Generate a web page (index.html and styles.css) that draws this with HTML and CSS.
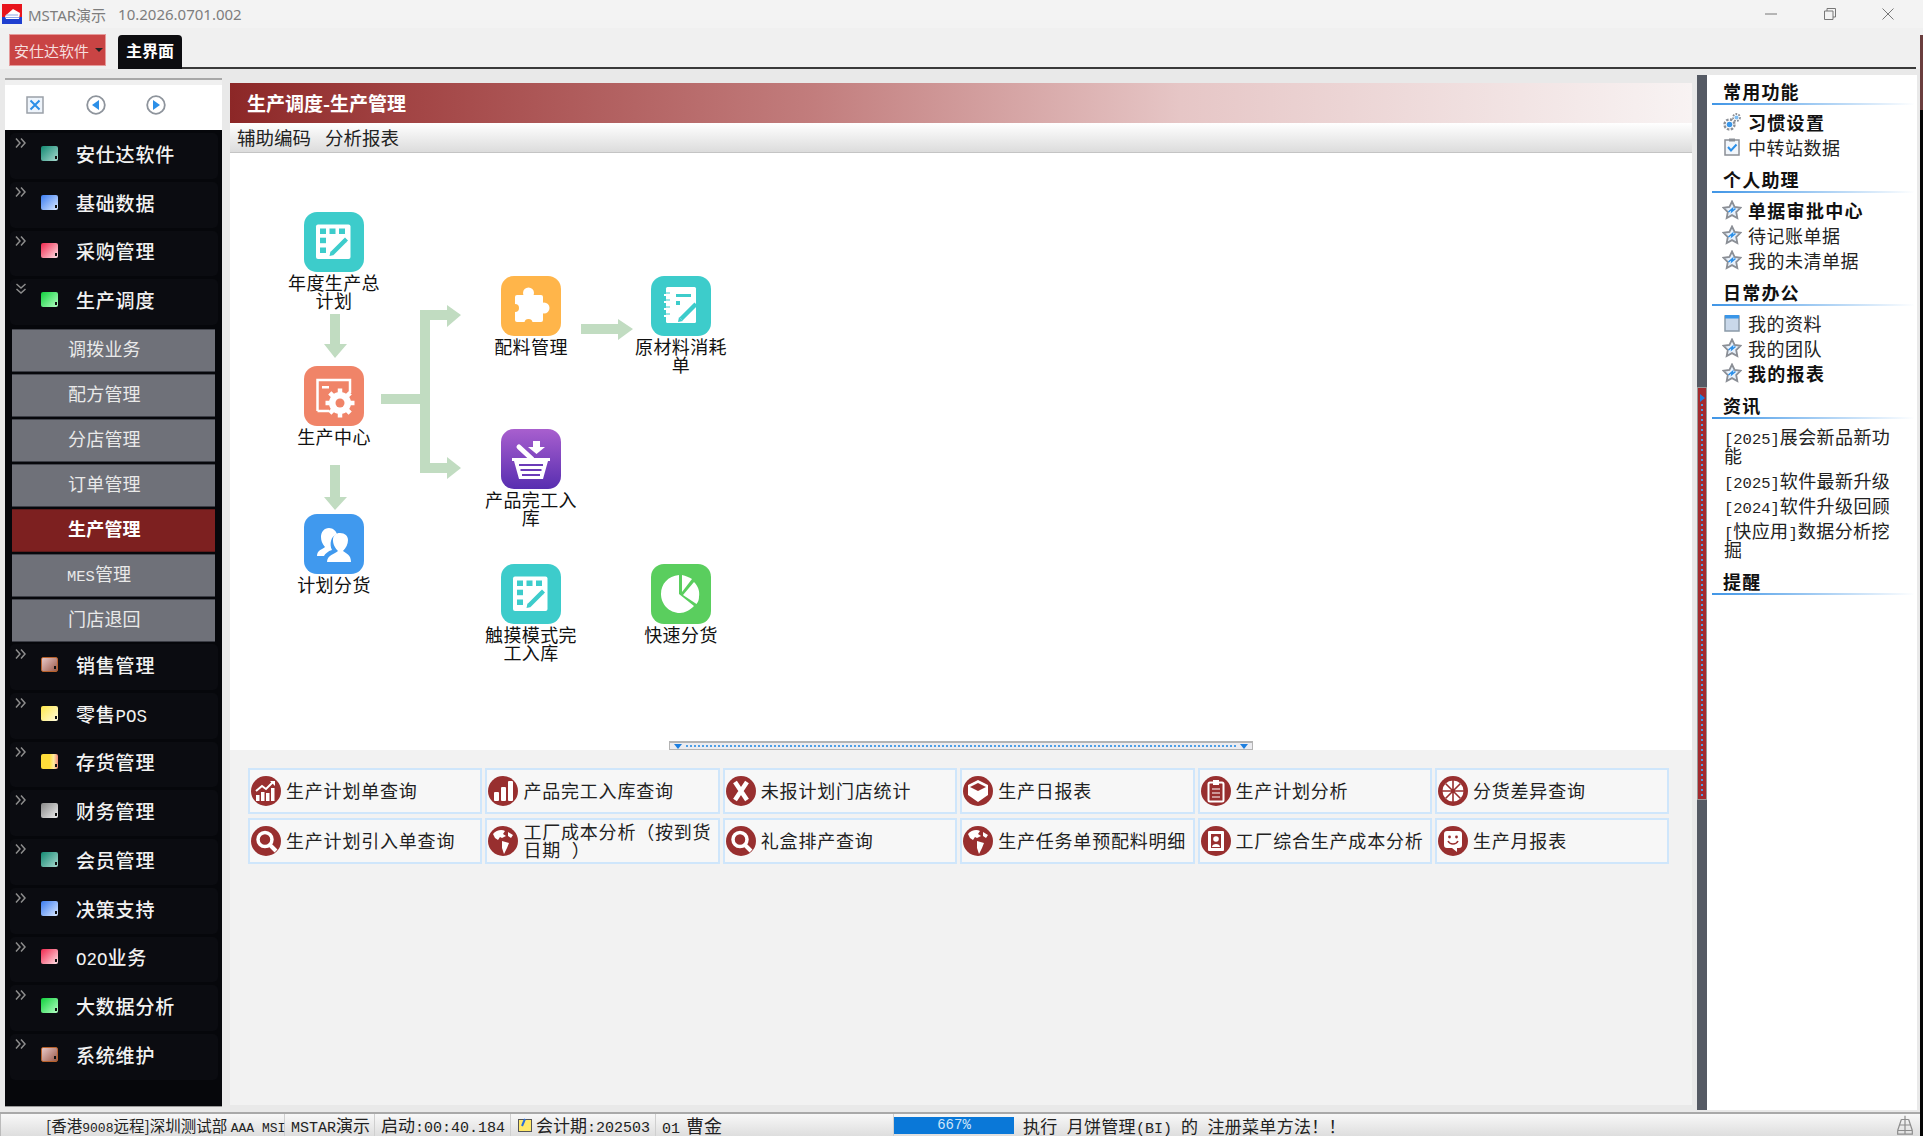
FILE: index.html
```html
<!DOCTYPE html>
<html lang="zh-CN">
<head>
<meta charset="utf-8">
<title>MSTAR演示</title>
<link rel="stylesheet" href="styles.css">
</head>
<body>
<svg class="defs" aria-hidden="true">
  <defs>
    <symbol id="i-edit" viewBox="0 0 60 60">
      <rect x="12" y="12.5" width="34.5" height="34.5" rx="2" fill="#fff"/>
      <g fill="#3dcccb"><rect x="16" y="16.500" width="6" height="5.500"/><rect x="25.500" y="16.500" width="6" height="5.500"/><rect x="35" y="16.500" width="6" height="5.500"/><rect x="16" y="25.700" width="6" height="5.500"/><rect x="16" y="35.500" width="6" height="5.500"/></g>
      <path d="M28 41.500 L41 28.500" stroke="#3dcccb" stroke-width="4.500" fill="none"/><path d="M25.500 44 l1 -4.500 l3.500 3.500z M41 25.500 l3 3 l-2 2 l-3 -3z" fill="#3dcccb"/>
    </symbol>
    <symbol id="i-search" viewBox="0 0 30 30"><circle cx="15" cy="15" r="15" fill="#982f2f"/><circle cx="14" cy="13.500" r="7" fill="none" stroke="#fff" stroke-width="3.500"/><path d="M19 19 L25 25" stroke="#fff" stroke-width="4"/></symbol>
    <symbol id="i-globe" viewBox="0 0 30 30"><circle cx="15" cy="15" r="15" fill="#982f2f"/><path d="M5 8 C8 4 14 3 17 5 L15 8 L18 10 L14 12 L12 11 L10 14 L7 12z M14 15 L21 17 L19 22 L16 28 L14 22z M20 6 L25 9 L23 12 L20 10z" fill="#fff"/></symbol>
    <symbol id="i-star" viewBox="0 0 20 20"><path d="M10 1.500 L12.600 7 L18.500 7.800 L14.200 12 L15.300 18 L10 15.100 L4.700 18 L5.800 12 L1.500 7.800 L7.400 7z" fill="#e8f1fb" stroke="#8b8f96" stroke-width="1.800"/><path d="M6.500 12 L10.500 8.500 L9.800 11.500 L13.500 8.500" fill="none" stroke="#2b8fe8" stroke-width="1.500"/></symbol>
    <symbol id="i-chev" viewBox="0 0 12 12"><path d="M1 1.500 L5 6 L1 10.500 M6 1.500 L10 6 L6 10.500" fill="none" stroke="#8d8d8d" stroke-width="1.500"/></symbol>
    <symbol id="i-chevd" viewBox="0 0 12 12"><path d="M1.500 1 L6 5 L10.500 1 M1.500 6 L6 10 L10.500 6" fill="none" stroke="#8d8d8d" stroke-width="1.500"/></symbol>
  </defs>
</svg>

<div class="app">
  <header class="titlebar">
    <svg class="logo" viewBox="0 0 20 20"><rect width="20" height="20" fill="#e8141c"/><rect y="13" width="20" height="7" fill="#1f3fd0"/><path d="M3 12 L11 5 L18 9 L17 15 L4 15z" fill="#fff"/><path d="M4 11 H16 M3 13.500 H17" stroke="#8fa6e8" stroke-width="1"/></svg>
    <span class="apptitle">MSTAR演示</span>
    <span class="appver">10.2026.0701.002</span>
    <div class="winbtns">
      <svg class="winbtn" viewBox="0 0 14 14"><path d="M1 7 H13" stroke="#777" fill="none"/></svg>
      <svg class="winbtn" viewBox="0 0 14 14"><path d="M1.500 4 H10 V12.500 H1.500z M4 4 V1.500 H12.500 V10 H10" stroke="#777" fill="none"/></svg>
      <svg class="winbtn" viewBox="0 0 14 14"><path d="M1.500 1.500 L12.500 12.500 M12.500 1.500 L1.500 12.500" stroke="#777" fill="none"/></svg>
    </div>
  </header>

  <div class="tabbar">
    <div class="menu-btn">安仕达软件<span class="caret"></span></div>
    <div class="tab">主界面</div>
  </div>

  <main class="main">
    <aside class="sidebar">
      <div class="side-tools">
        <svg class="tool" viewBox="0 0 20 20"><rect x="2" y="2" width="16" height="16" fill="#eef4fb" stroke="#9aa0a8" stroke-width="1.500"/><path d="M5.500 5.500 L14.500 14.500 M14.500 5.500 L5.500 14.500" stroke="#2b8fe8" stroke-width="2"/></svg>
        <svg class="tool" viewBox="0 0 20 20"><circle cx="10" cy="10" r="8.800" fill="#fff" stroke="#8e949c" stroke-width="1.800"/><path d="M13 5 V15 L6 10z" fill="#2b8fe8"/></svg>
        <svg class="tool" viewBox="0 0 20 20"><circle cx="10" cy="10" r="8.800" fill="#fff" stroke="#8e949c" stroke-width="1.800"/><path d="M7 5 V15 L14 10z" fill="#2b8fe8"/></svg>
      </div>
      <nav class="nav">
        <div class="nav-h"><svg class="chev"><use href="#i-chev"/></svg><i class="sq sq-teal"></i><span>安仕达软件</span></div>
        <div class="nav-h"><svg class="chev"><use href="#i-chev"/></svg><i class="sq sq-blue"></i><span>基础数据</span></div>
        <div class="nav-h"><svg class="chev"><use href="#i-chev"/></svg><i class="sq sq-red"></i><span>采购管理</span></div>
        <div class="nav-h"><svg class="chev"><use href="#i-chevd"/></svg><i class="sq sq-green"></i><span>生产调度</span></div>
        <div class="nav-subs">
          <div class="sub">调拨业务</div>
          <div class="sub">配方管理</div>
          <div class="sub">分店管理</div>
          <div class="sub">订单管理</div>
          <div class="sub sub-on">生产管理</div>
          <div class="sub sub-left"><span class="lat">MES</span>管理</div>
          <div class="sub">门店退回</div>
        </div>
        <div class="nav-h"><svg class="chev"><use href="#i-chev"/></svg><i class="sq sq-brown"></i><span>销售管理</span></div>
        <div class="nav-h"><svg class="chev"><use href="#i-chev"/></svg><i class="sq sq-yellow"></i><span>零售<span class="lat">POS</span></span></div>
        <div class="nav-h"><svg class="chev"><use href="#i-chev"/></svg><i class="sq sq-stock"></i><span>存货管理</span></div>
        <div class="nav-h"><svg class="chev"><use href="#i-chev"/></svg><i class="sq sq-gray"></i><span>财务管理</span></div>
        <div class="nav-h"><svg class="chev"><use href="#i-chev"/></svg><i class="sq sq-teal"></i><span>会员管理</span></div>
        <div class="nav-h"><svg class="chev"><use href="#i-chev"/></svg><i class="sq sq-blue"></i><span>决策支持</span></div>
        <div class="nav-h"><svg class="chev"><use href="#i-chev"/></svg><i class="sq sq-red"></i><span><span class="lat">O2O</span>业务</span></div>
        <div class="nav-h"><svg class="chev"><use href="#i-chev"/></svg><i class="sq sq-green"></i><span>大数据分析</span></div>
        <div class="nav-h"><svg class="chev"><use href="#i-chev"/></svg><i class="sq sq-brown"></i><span>系统维护</span></div>
      </nav>
    </aside>

    <section class="center">
      <div class="page-head">生产调度-生产管理</div>
      <div class="page-sub"><span>辅助编码</span><span>分析报表</span></div>
      <div class="canvas">
        <svg class="flow" viewBox="0 0 520 400">
          <g fill="#c1dcc1">
            <polygon points="100,161 110,161 110,191 117,191 105,205 94,191 100,191"/>
            <polygon points="100,312 110,312 110,344 117,344 105,357 94,344 100,344"/>
            <polygon points="151,241 190,241 190,157 217,157 217,152 231,162 217,174 217,167 200,167 200,310 217,310 217,304 231,315 217,326 217,320 190,320 190,251 151,251"/>
            <polygon points="351,171 388,171 388,166 403,176 388,187 388,181 351,181"/>
          </g>
        </svg>

        <div class="node n1">
          <svg class="node-ic teal"><use href="#i-edit"/></svg>
          <div class="node-t">年度生产总计划</div>
        </div>
        <div class="node n2">
          <svg class="node-ic salmon" viewBox="0 0 60 60">
            <path d="M13.500 45 V14 H46 V27" fill="none" stroke="#fff" stroke-width="2.500"/><path d="M13.500 45 H25" fill="none" stroke="#fff" stroke-width="2.500"/><rect x="18" y="20" width="7" height="2.500" fill="#fff"/>
            <circle cx="36" cy="37" r="11" fill="#fff"/><g stroke="#fff" stroke-width="4.500"><path d="M36 22.500 V51.500 M21.500 37 H50.500 M25.800 26.800 L46.200 47.200 M46.200 26.800 L25.800 47.200"/></g><circle cx="36" cy="37" r="4.500" fill="#f08468"/>
          </svg>
          <div class="node-t">生产中心</div>
        </div>
        <div class="node n3">
          <svg class="node-ic blue" viewBox="0 0 60 60">
            <path d="M13 42 C13 36 19 35 21 33 C18 30 17 26 17 23 C17 18 20 14 25 14 C29 14 32 17 33 20 C27 22 25 30 28 36 C24 37 21 40 20 42z" fill="#fff"/>
            <path d="M23 48 C23 41 31 40 34 37 C30 33 29 29 29 26 C29 21 32 19 36 19 C41 19 44 22 44 26 C44 30 42 34 39 37 C43 40 47 41 47 48z" fill="#fff"/>
          </svg>
          <div class="node-t">计划分货</div>
        </div>
        <div class="node n4">
          <svg class="node-ic amber" viewBox="0 0 60 60">
            <rect x="14" y="19" width="28" height="27" rx="2" fill="#fff"/><circle cx="27.500" cy="17" r="5.500" fill="#fff"/><circle cx="43" cy="32" r="5.500" fill="#fff"/><circle cx="14" cy="32" r="4" fill="#ffb54a"/><circle cx="27.500" cy="47" r="4" fill="#ffb54a"/>
          </svg>
          <div class="node-t">配料管理</div>
        </div>
        <div class="node n5">
          <svg class="node-ic teal" viewBox="0 0 60 60">
            <rect x="15" y="11" width="30" height="36" rx="1.500" fill="#fff"/>
            <path d="M13 19 H19 M13 26 H19 M13 33 H19 M13 40 H19" stroke="#fff" stroke-width="2"/><path d="M14 17 H19 M14 24 H19 M14 31 H19 M14 38 H19" stroke="#3dcccb" stroke-width="1.200"/>
            <rect x="25" y="18" width="15" height="3" fill="#3dcccb"/><rect x="25" y="25" width="4" height="4" fill="#3dcccb"/>
            <path d="M30 43 L45 28" stroke="#3dcccb" stroke-width="4.500"/><path d="M27 46 l1 -5 l4 4z" fill="#3dcccb"/>
          </svg>
          <div class="node-t">原材料消耗单</div>
        </div>
        <div class="node n6">
          <svg class="node-ic purple" viewBox="0 0 60 60">
            <path d="M32 12 H39 V18 H44 L35.500 25 L27 18 H32z" fill="#fff"/>
            <path d="M18 18 L31 30" stroke="#fff" stroke-width="5" stroke-linecap="round"/>
            <path d="M11 29 H49 V32 H47 L42 50 H18 L13 32 H11z" fill="#fff"/>
            <path d="M18 36 H42 M19.500 41 H40.500 M21 46 H39" stroke="#6b3bb8" stroke-width="1.800"/>
          </svg>
          <div class="node-t">产品完工入库</div>
        </div>
        <div class="node n7">
          <svg class="node-ic teal"><use href="#i-edit"/></svg>
          <div class="node-t">触摸模式完工入库</div>
        </div>
        <div class="node n8">
          <svg class="node-ic green" viewBox="0 0 60 60">
            <path d="M28 30 V11 C17 12 10 20 10 30 C10 40 18 49 29 49 C34 49 39 46 43 42z" fill="#fff"/>
            <path d="M31 11 V28 L41 15 C38 13 35 12 31 11z" fill="#fff"/>
            <path d="M32 31 L43 18 C47 22 49 27 48 33 C48 36 47 38 45.500 40z" fill="#fff"/>
          </svg>
          <div class="node-t">快速分货</div>
        </div>

        <div class="split-h"><span class="tri"></span><span class="dots"></span><span class="tri"></span></div>
      </div>

      <div class="lower">
        <div class="tiles">
          <div class="tile">
            <svg class="tile-ic" viewBox="0 0 30 30"><circle cx="15" cy="15" r="15" fill="#982f2f"/><path d="M5 15 L11 10 L15 13 L22 6" fill="none" stroke="#fff" stroke-width="2"/><path d="M19 5 H24 V10z" fill="#fff"/><rect x="5" y="19" width="3.500" height="6" fill="#fff"/><rect x="10" y="16" width="3.500" height="9" fill="#fff"/><rect x="15" y="17" width="3.500" height="8" fill="#fff"/><rect x="20" y="12" width="3.500" height="13" fill="#fff"/></svg>
            <span>生产计划单查询</span>
          </div>
          <div class="tile">
            <svg class="tile-ic" viewBox="0 0 30 30"><circle cx="15" cy="15" r="15" fill="#982f2f"/><rect x="6" y="16" width="5" height="9" rx="1" fill="#fff"/><rect x="13" y="11" width="5" height="14" rx="1" fill="#fff"/><rect x="20" y="5" width="5" height="20" rx="1" fill="#fff"/></svg>
            <span>产品完工入库查询</span>
          </div>
          <div class="tile">
            <svg class="tile-ic" viewBox="0 0 30 30"><circle cx="15" cy="15" r="15" fill="#982f2f"/><path d="M9 6 L21 24 M21 6 L9 24" stroke="#fff" stroke-width="4.500"/></svg>
            <span>未报计划门店统计</span>
          </div>
          <div class="tile">
            <svg class="tile-ic" viewBox="0 0 30 30"><circle cx="15" cy="15" r="15" fill="#982f2f"/><path d="M15 4 L25 9 V19 L15 26 L5 19 V9z" fill="#fff"/><path d="M7 11 L15 7 L23 11 L15 15z" fill="#982f2f"/></svg>
            <span>生产日报表</span>
          </div>
          <div class="tile">
            <svg class="tile-ic" viewBox="0 0 30 30"><circle cx="15" cy="15" r="15" fill="#982f2f"/><rect x="7.500" y="6.500" width="15" height="19" rx="1.500" fill="none" stroke="#fff" stroke-width="2"/><rect x="12" y="4" width="6" height="5" fill="#fff"/><path d="M11 13 H19 M11 17 H19 M11 21 H19" stroke="#fff" stroke-width="1.200"/></svg>
            <span>生产计划分析</span>
          </div>
          <div class="tile">
            <svg class="tile-ic" viewBox="0 0 30 30"><circle cx="15" cy="15" r="15" fill="#982f2f"/><circle cx="15" cy="15" r="10.500" fill="#fff"/><path d="M15 4 V26 M4 15 H26 M7.500 7.500 L22.500 22.500 M22.500 7.500 L7.500 22.500" stroke="#982f2f" stroke-width="1.600"/></svg>
            <span>分货差异查询</span>
          </div>
          <div class="tile">
            <svg class="tile-ic"><use href="#i-search"/></svg>
            <span>生产计划引入单查询</span>
          </div>
          <div class="tile">
            <svg class="tile-ic"><use href="#i-globe"/></svg>
            <span>工厂成本分析（按到货日期 ）</span>
          </div>
          <div class="tile">
            <svg class="tile-ic"><use href="#i-search"/></svg>
            <span>礼盒排产查询</span>
          </div>
          <div class="tile">
            <svg class="tile-ic"><use href="#i-globe"/></svg>
            <span>生产任务单预配料明细</span>
          </div>
          <div class="tile">
            <svg class="tile-ic" viewBox="0 0 30 30"><circle cx="15" cy="15" r="15" fill="#982f2f"/><rect x="7" y="5" width="16" height="20" rx="1" fill="#fff"/><rect x="10" y="8" width="10" height="14" fill="#982f2f"/><circle cx="15" cy="13" r="2.800" fill="#fff"/><path d="M11 21 C11 17 19 17 19 21z" fill="#fff"/></svg>
            <span>工厂综合生产成本分析</span>
          </div>
          <div class="tile">
            <svg class="tile-ic" viewBox="0 0 30 30"><circle cx="15" cy="15" r="15" fill="#982f2f"/><path d="M6 8 C6 6 7 5 9 5 H21 C23 5 24 6 24 8 V19 C24 21 23 22 21 22 H19 L19 26 L14 22 H9 C7 22 6 21 6 19z" fill="#fff"/><path d="M10 15 C12 19 18 19 20 15" fill="none" stroke="#982f2f" stroke-width="1.600"/><circle cx="11.500" cy="11" r="1.400" fill="#982f2f"/><circle cx="18.500" cy="11" r="1.400" fill="#982f2f"/></svg>
            <span>生产月报表</span>
          </div>
        </div>
      </div>
    </section>

    <div class="split-v"><span class="split-red"><span class="tri-r"></span><span class="dots-v"></span></span></div>

    <aside class="rightbar">
      <h3 class="r-head">常用功能</h3>
      <ul class="r-list">
        <li class="strong"><svg class="r-ic" viewBox="0 0 20 20"><g fill="none" stroke="#8b8f96"><circle cx="7.500" cy="12.500" r="5" stroke-width="2.400" stroke-dasharray="2.500 1.400"/><circle cx="14.500" cy="5.500" r="3.500" stroke-width="1.800" stroke-dasharray="1.800 1.200"/></g><circle cx="7.500" cy="12.500" r="2.800" fill="#3a96e8"/><circle cx="14.500" cy="5.500" r="2" fill="#7fbdf2"/></svg>习惯设置</li>
        <li><svg class="r-ic" viewBox="0 0 20 20"><rect x="3" y="3" width="14" height="15" fill="#f2f6fb" stroke="#8b8f96" stroke-width="1.500"/><rect x="7" y="1.500" width="6" height="3" fill="#8b8f96"/><path d="M6 10 L9 13.500 L14.500 7.500" fill="none" stroke="#2b8fe8" stroke-width="2"/></svg>中转站数据</li>
      </ul>
      <h3 class="r-head">个人助理</h3>
      <ul class="r-list">
        <li class="strong"><svg class="r-ic"><use href="#i-star"/></svg>单据审批中心</li>
        <li><svg class="r-ic"><use href="#i-star"/></svg>待记账单据</li>
        <li><svg class="r-ic"><use href="#i-star"/></svg>我的未清单据</li>
      </ul>
      <h3 class="r-head">日常办公</h3>
      <ul class="r-list">
        <li><svg class="r-ic" viewBox="0 0 20 20"><rect x="3" y="3" width="14" height="15" fill="#c9d8ea" stroke="#8b9aa8" stroke-width="1.500"/><rect x="3" y="2" width="14" height="3.500" fill="#3a96e8"/></svg>我的资料</li>
        <li><svg class="r-ic"><use href="#i-star"/></svg>我的团队</li>
        <li class="strong"><svg class="r-ic"><use href="#i-star"/></svg>我的报表</li>
      </ul>
      <h3 class="r-head">资讯</h3>
      <ul class="r-news">
        <li><span class="lat">[2025]</span>展会新品新功能</li>
        <li><span class="lat">[2025]</span>软件最新升级</li>
        <li><span class="lat">[2024]</span>软件升级回顾</li>
        <li><span class="lat">[</span>快应用<span class="lat">]</span>数据分析挖掘</li>
      </ul>
      <h3 class="r-head">提醒</h3>
    </aside>
  </main>

  <footer class="status">
    <div class="st st-1">[香港<span class="lat">9008</span>远程]深圳测试部 <span class="lat">AAA MSI</span></div>
    <div class="st st-2"><span class="lat">MSTAR</span>演示</div>
    <div class="st st-3">启动<span class="lat">:00:40.184</span></div>
    <div class="st st-4"><svg class="st-ic" viewBox="0 0 16 16"><rect x="1.500" y="2.500" width="13" height="12" fill="#ffe96a" stroke="#555"/><path d="M5 9 L8 2" stroke="#2b6fd8" stroke-width="2"/></svg><span>会计期<span class="lat">:202503</span></span></div>
    <div class="st st-5"><span class="lat">01</span> 曹金</div>
    <div class="progress">667%</div>
    <div class="st-msg">执行 月饼管理<span class="lat">(BI)</span> 的 注册菜单方法！！</div>
    <svg class="st-grip" viewBox="0 0 20 24"><path d="M10 2 V22 M6 6 H14 M4 12 H16 M2 18 H18 M6 6 L2 18 M14 6 L18 18 M2 18 V22 H18 V18" fill="none" stroke="#8c8c8c" stroke-width="1.300"/></svg>
  </footer>
  <div class="edge"></div>
</div>
</body>
</html>
```

FILE: styles.css
```css
* { box-sizing: border-box; }
html, body { margin: 0; padding: 0; }
body {
  font-family: "Noto Sans CJK SC", "Noto Sans", sans-serif;
  font-size: 18px;
  color: #222;
  background: #e9e9e9;
}
.defs { position: absolute; width: 0; height: 0; overflow: hidden; }
.lat { font-family: "Liberation Mono", monospace; font-size: 15.5px; letter-spacing: 0; line-height: 0; }
.app { position: relative; display: flex; flex-direction: column; width: 1923px; height: 1136px; overflow: hidden; }

/* title bar */
.titlebar { display: flex; align-items: center; height: 28px; flex: none; background: #f3f3f3; padding-left: 2px; }
.logo { width: 20px; height: 20px; flex: none; }
.apptitle { margin-left: 6px; font-family: "Noto Sans", "Noto Sans CJK SC", sans-serif; font-size: 15px; color: #7d7d7d; }
.appver { margin-left: 12px; font-family: "Noto Sans", sans-serif; font-size: 15px; color: #7d7d7d; }
.winbtns { display: flex; margin-left: auto; gap: 44.5px; margin-right: 28px; }
.winbtn { width: 14px; height: 14px; display: block; }

/* tabs */
.tabbar { display: flex; align-items: flex-end; flex: none; height: 41px; background: #f0f0f0; padding-left: 9px; }
.menu-btn { display: flex; align-items: center; width: 97px; height: 32px; margin-bottom: 3px; padding-left: 4px; background: #c94444; border: 1px solid #e59a9a; color: #f6dede; font-size: 15px; white-space: nowrap; }
.caret { margin-left: 6px; border: 4px solid transparent; border-top-color: #222; border-bottom-width: 0; }
.tab { width: 64px; height: 34px; margin-left: 12px; background: #0d0d10; color: #fff; border-radius: 4px 4px 0 0; font-size: 16px; font-weight: 700; text-align: center; line-height: 30px; }
.tabbar::after { content: ""; width: 1734px; height: 2px; background: #3a3a3a; }

/* main */
.main { display: flex; align-items: stretch; flex: 1; min-height: 0; background: #e9e9e9; }
.sidebar { display: flex; flex-direction: column; width: 217px; margin: 9px 0 5px 5px; border-top: 2px solid #a8a8a8; padding-top: 5px; background: #f0f0f0; flex: none; }
.side-tools { display: flex; align-items: center; height: 45px; flex: none; background: #fff; padding: 0 0 6px 20px; gap: 40.5px; }
.tool { width: 20px; height: 20px; }
.nav { flex: 1; padding-top: 3px; background: #06070b; border-bottom: 1px solid #999; }
.nav-h { display: flex; align-items: center; height: 45.75px; margin: 0 4px 3px 5px; padding: 0 0 5px 5px; background: #0b0c11; border-radius: 5px; color: #f2f2f2; font-size: 19px; font-weight: 500; letter-spacing: .8px; white-space: nowrap; }
.nav-h .lat { font-size: 17.5px; }
.chev { align-self: flex-start; width: 12px; height: 12px; margin-top: 4px; flex: none; }
.sq { display: block; position: relative; width: 17px; height: 15px; margin: 0 18px 0 14px; flex: none; border-radius: 2px; }
.sq::after { content: ""; position: absolute; right: 1px; bottom: 2px; width: 2px; height: 3px; background: #111; }
.sq-teal { background: linear-gradient(135deg, #128a72, #a9d9cf); }
.sq-blue { background: linear-gradient(135deg, #3a7cf2, #dbe9ff); }
.sq-red { background: linear-gradient(135deg, #f0284e, #ffe2e7); }
.sq-green { background: linear-gradient(135deg, #10d13c, #b4ffc4); }
.sq-brown { background: linear-gradient(135deg, #e9c9c9, #9a5a4a); border: 1px solid #b8622c; }
.sq-yellow { background: linear-gradient(135deg, #ffe94a, #fffbe0); }
.sq-stock { background: linear-gradient(90deg, #ffdd3a 50%, #ffe9a0 75%, #f08a7a); }
.sq-gray { background: linear-gradient(135deg, #888, #eee); }
.nav-subs { display: flex; flex-direction: column; margin: 0 7px; gap: 2px; height: 316px; padding-top: 1px; }
.sub { height: 43px; background: #6f7179; border-top: 1px solid #44464e; border-bottom: 1px solid #3b3d45; color: #e9e9e9; font-size: 18px; line-height: 37px; padding-left: 56px; white-space: nowrap; letter-spacing: .2px; }
.sub-left { padding-left: 55px; }
.sub-on { background: #7d2020; color: #fff; font-weight: 700; border-color: #5c1a1a; }

/* center */
.center { display: flex; flex-direction: column; width: 1462px; margin: 14px 0 7px 8px; flex: none; }
.page-head { flex: none; height: 40px; padding-left: 17px; background: linear-gradient(90deg, #8c2727 0%, #a24444 12%, #c27d7d 40%, #e6c6c6 65%, #f8f3f3 100%); color: #fff; font-size: 19px; font-weight: 700; line-height: 40px; }
.page-sub { display: flex; gap: 14px; flex: none; height: 30px; padding: 0 0 2px 7px; align-items: center; background: linear-gradient(#fff, #dcdcdc); border-bottom: 1px solid #c4c4c4; font-size: 18.500px; }
.canvas { position: relative; flex: none; height: 597px; background: #fff; }
.flow { position: absolute; left: 0; top: 0; width: 520px; height: 400px; }
.node { position: absolute; display: flex; flex-direction: column; align-items: center; width: 96px; }
.node-ic { width: 60px; height: 60px; border-radius: 13px; display: block; flex: none; }
.node-t { margin-top: 1px; font-size: 18px; line-height: 18px; text-align: center; letter-spacing: .4px; color: #111; }
.teal { background: #3dcccb; }
.salmon { background: #f08468; }
.blue { background: #4099ee; }
.amber { background: #ffb54a; }
.green { background: #5ace5e; }
.purple { background: linear-gradient(#a85fce, #582eb0); }
.n1 { left: 56px; top: 59px; }
.n2 { left: 56px; top: 213px; }
.n3 { left: 56px; top: 361px; }
.n4 { left: 253px; top: 123px; }
.n5 { left: 403px; top: 123px; }
.n6 { left: 253px; top: 276px; }
.n7 { left: 253px; top: 411px; }
.n8 { left: 403px; top: 411px; }
.split-h { position: absolute; left: 439px; bottom: 0; display: flex; align-items: center; gap: 4px; width: 584px; height: 9px; padding: 0 4px; background: #ececf0; border: 1px solid #b4b4b4; border-top-width: 2px; }
.tri { width: 0; height: 0; border: 4px solid transparent; border-top: 5px solid #1d7fe0; border-bottom-width: 0; flex: none; }
.dots { flex: 1; height: 2px; background: repeating-linear-gradient(90deg, #4d9fe6 0 2px, transparent 2px 4px); }
.lower { flex: 1; background: #f2f2f2; padding: 18px 0 0 18px; }
.tiles { display: grid; grid-template-columns: repeat(6, 234.400px); grid-auto-rows: 46px; column-gap: 3px; row-gap: 4px; }
.tile { display: flex; align-items: center; padding: 0 0 0 1px; gap: 5px; background: #f7f7f7; border: 2px solid #cfe6fb; font-size: 18px; letter-spacing: .8px; word-spacing: 6px; color: #222; overflow: hidden; }
.tile span { line-height: 18px; margin-bottom: 3px; }
.tile-ic { width: 30px; height: 30px; flex: none; }

/* splitter */
.split-v { display: flex; flex-direction: column; width: 10px; margin: 6px 0 2px 5px; flex: none; background: #555a64; }
.split-red { display: flex; flex-direction: column; align-items: center; height: 413px; margin-top: 312px; background: #a32a2e; border: 1px solid #999; }
.tri-r { width: 0; height: 0; margin: 6px 0 2px 1px; border: 4px solid transparent; border-left: 5px solid #1d7fe0; border-right-width: 0; flex: none; }
.dots-v { flex: 1; width: 2px; background: repeating-linear-gradient(#4d9fe6 0 2px, transparent 2px 5px); }

/* right */
.rightbar { width: 210px; margin: 6px 0 2px 0; background: #fff; flex: none; padding-left: 5px; padding-right: 3px; }
.r-head { height: 30px; margin: 0; padding-left: 11px; font-size: 18px; font-weight: 700; line-height: 33px; letter-spacing: 1.2px; color: #111; border-bottom: 2px solid; border-image: linear-gradient(90deg, #3f95e6, #fff) 1; }
.r-list { list-style: none; margin: 4px 0 4px; padding: 0; }
.r-news { list-style: none; margin: 5px 0 3px; padding: 0; }
.r-list li { display: flex; align-items: center; height: 25px; padding-left: 10px; font-size: 18px; letter-spacing: .5px; color: #222; white-space: nowrap; }
.r-list li.strong { font-weight: 700; color: #111; letter-spacing: 1.3px; }
.r-ic { width: 20px; height: 20px; margin-right: 6px; flex: none; }
.r-news li { width: 186px; padding: 3px 0 3px 12px; font-size: 18px; line-height: 19px; letter-spacing: .4px; color: #222; }

/* status */
.status { display: flex; align-items: center; flex: none; height: 24px; border-top: 2px solid #a9a9a9; background: linear-gradient(#f8f8f8, #dedede); font-size: 17px; white-space: nowrap; color: #222; }
.st { height: 100%; line-height: 22px; padding-left: 6px; border-right: 1px solid #cfcfcf; flex: none; }
.status .lat { font-size: 15px; }
.st-1 { width: 285px; padding-left: 45px; border-left: 1px solid #bbb; font-size: 15.5px; }
.status .st-1 .lat { font-size: 13px; }
.st-2 { width: 90px; }
.st-3 { width: 136px; }
.st-4 { width: 145px; display: flex; align-items: center; gap: 3px; }
.st-5 { width: 238px; font-size: 18px; word-spacing: 2px; }
.st-ic { width: 16px; height: 16px; flex: none; }
.progress { width: 120px; height: 17px; background: #0a78d8; color: #cfe5f9; font-size: 14px; line-height: 17px; text-align: center; font-family: "Liberation Mono", monospace; flex: none; }
.st-msg { margin-left: 9px; word-spacing: 5px; letter-spacing: .3px; }
.st-grip { width: 20px; height: 22px; margin-left: auto; margin-right: 8px; }

.edge { position: absolute; right: 0; top: 35px; width: 3px; bottom: 0; background: linear-gradient(#6a3d3d 0 75px, #050505 75px); }
```
